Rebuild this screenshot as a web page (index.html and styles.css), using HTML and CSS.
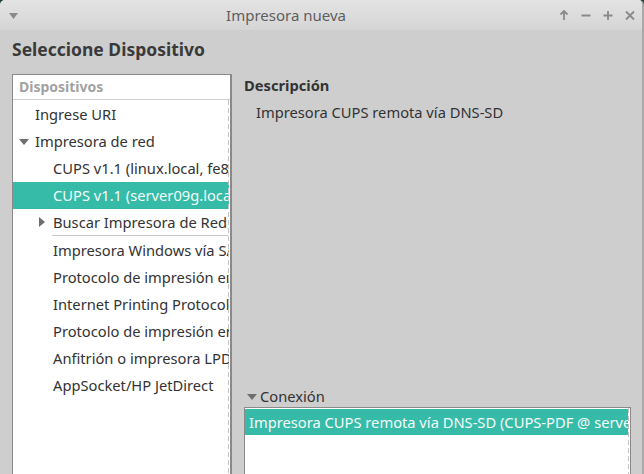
FILE: index.html
```html
<!DOCTYPE html>
<html lang="es">
<head>
<meta charset="utf-8">
<title>Impresora nueva</title>
<link rel="stylesheet" href="styles.css">
</head>
<body>
<div class="window">
  <div class="titlebar">
    <span class="tb-menu"><svg width="9" height="6" viewBox="0 0 9 6"><path d="M0 0H9L4.5 6Z" fill="#8a8a8a"/></svg></span>
    <span class="tb-title">Impresora nueva</span>
    <span class="tb-buttons">
      <svg width="12" height="12" viewBox="0 0 12 12"><path d="M6 11V2M2.5 5.5L6 2L9.5 5.5" stroke="#8a8a8a" stroke-width="1.8" fill="none"/></svg>
      <svg width="12" height="12" viewBox="0 0 12 12"><path d="M1.5 6.5H10.5" stroke="#8a8a8a" stroke-width="1.8"/></svg>
      <svg width="12" height="12" viewBox="0 0 12 12"><path d="M1.5 6.5H10.5M6 2V11" stroke="#8a8a8a" stroke-width="1.8"/></svg>
      <svg width="12" height="12" viewBox="0 0 12 12"><path d="M2 2.5L10 10.5M10 2.5L2 10.5" stroke="#8a8a8a" stroke-width="1.8"/></svg>
    </span>
  </div>
  <div class="content">
    <h1 class="heading">Seleccione Dispositivo</h1>
    <div class="main">
      <div class="tree">
        <div class="tree-header">Dispositivos</div>
        <div class="tree-body">
          <div class="row lvl1">Ingrese URI</div>
          <div class="row lvl1"><span class="exp down"></span>Impresora de red</div>
          <div class="row lvl2">CUPS v1.1 (linux.local, fe80::</div>
          <div class="row lvl2 selected">CUPS v1.1 (server09g.local, fe80::</div>
          <div class="row lvl2"><span class="exp right"></span>Buscar Impresora de Red</div>
          <div class="sep"></div>
          <div class="row lvl2">Impresora Windows vía SAMBA</div>
          <div class="row lvl2">Protocolo de impresión en línea</div>
          <div class="row lvl2">Internet Printing Protocol (ipp)</div>
          <div class="row lvl2">Protocolo de impresión en línea</div>
          <div class="row lvl2">Anfitrión o impresora LPD/LPR</div>
          <div class="row lvl2">AppSocket/HP JetDirect</div>
        </div>
      </div>
      <div class="details">
        <div class="label-bold">Descripción</div>
        <div class="desc">Impresora CUPS remota vía DNS-SD</div>
        <div class="spacer"></div>
        <div class="conn-label"><span class="exp down"></span>Conexión</div>
        <div class="conn-box">
          <div class="conn-row selected">Impresora CUPS remota vía DNS-SD (CUPS-PDF @ server09g)</div>
        </div>
      </div>
    </div>
  </div>
</div>
</body>
</html>
```

FILE: styles.css
```css
html, body {
  margin: 0;
  padding: 0;
  height: 100%;
  overflow: hidden;
}
body {
  background: #1f3d35;
  font-family: "Noto Sans", "Open Sans", sans-serif;
  font-size: 14.7px;
  color: #3a3a3a;
}
.window {
  height: 100%;
  background: #cecece;
  border-radius: 5px 5px 0 0;
  border-right: 2px solid #a9a9a9;
  box-sizing: border-box;
  display: flex;
  flex-direction: column;
  overflow: hidden;
}
.titlebar {
  height: 30px;
  flex: none;
  display: flex;
  align-items: center;
  position: relative;
  background: linear-gradient(#e3e3e3, #d5d5d5);
}
.tb-menu {
  display: flex;
  margin-left: 9px;
  margin-top: 1px;
}
.tb-title {
  position: absolute;
  left: 0;
  right: 70px;
  text-align: center;
  font-size: 15px;
  color: #5e5e5e;
  pointer-events: none;
}
.tb-buttons {
  margin-left: auto;
  margin-right: 6px;
  display: flex;
  gap: 10px;
}
.tb-buttons svg { display: block; }
.content {
  flex: 1;
  display: flex;
  flex-direction: column;
  padding: 0 0 0 12px;
  min-height: 0;
}
.heading {
  margin: 7px 0 0 0;
  font-size: 17.5px;
  font-weight: bold;
  line-height: 24px;
  color: #3a3a3a;
}
.main {
  flex: 1;
  display: flex;
  margin-top: 13px;
  min-height: 0;
}
.tree {
  width: 220px;
  flex: none;
  background: #fff;
  border: 1px solid #8a8a8a;
  border-right-width: 2px;
  border-bottom: none;
  box-sizing: border-box;
  display: flex;
  flex-direction: column;
}
.tree-header {
  height: 24px;
  line-height: 24px;
  padding-left: 6px;
  font-weight: bold;
  font-size: 14px;
  color: #a2a2a2;
  border-bottom: 1px solid #cfcfcf;
  flex: none;
}
.tree-body {
  flex: 1;
  position: relative;
  overflow: hidden;
  padding-top: 1px;
}
.tree-body::after {
  content: "";
  position: absolute;
  top: 0;
  bottom: 0;
  right: 1px;
  width: 1px;
  background: repeating-linear-gradient(#c4c4c4 0 5px, transparent 5px 8px);
}
.row {
  height: 26.9px;
  line-height: 26.9px;
  white-space: nowrap;
  overflow: hidden;
  position: relative;
  color: #333;
  margin-right: 1px;
}
.lvl1 { padding-left: 22px; }
.lvl2 { padding-left: 40px; }
.row.selected {
  background: #36bba8;
  color: #f4fbfa;
}
.exp {
  position: absolute;
  width: 0;
  height: 0;
}
.exp.down {
  left: 6px;
  top: 11px;
  border-left: 5px solid transparent;
  border-right: 5px solid transparent;
  border-top: 6px solid #6e6e6e;
}
.exp.right {
  left: 26px;
  top: 8px;
  border-top: 5px solid transparent;
  border-bottom: 5px solid transparent;
  border-left: 6px solid #6e6e6e;
}
.sep {
  height: 1px;
  background: #c8c8c8;
  margin: 0 2px 1px 39px;
}
.details {
  flex: 1;
  display: flex;
  flex-direction: column;
  padding-left: 12px;
  padding-right: 11px;
  min-width: 0;
}
.label-bold {
  font-weight: bold;
  line-height: 24px;
  margin-top: -1px;
  color: #333;
}
.desc {
  line-height: 24px;
  margin-top: 3px;
  padding-left: 12px;
  color: #333;
}
.spacer { flex: 1; }
.conn-label {
  position: relative;
  padding-left: 16px;
  line-height: 20px;
  color: #333;
  margin-bottom: 1px;
}
.conn-label .exp.down {
  left: 3px;
  top: 8px;
}
.conn-box {
  height: 65px;
  background: #fff;
  border: 1px solid #8a8a8a;
  border-bottom: none;
  position: relative;
  overflow: hidden;
  padding-top: 1px;
}
.conn-box::after {
  content: "";
  position: absolute;
  top: 0;
  bottom: 0;
  right: 1px;
  width: 1px;
  background: repeating-linear-gradient(#c4c4c4 0 5px, transparent 5px 8px);
}
.conn-row {
  height: 26px;
  line-height: 26px;
  padding-left: 4px;
  white-space: nowrap;
  overflow: hidden;
  margin-right: 2px;
}
.conn-row.selected {
  background: #36bba8;
  color: #f4fbfa;
}
```
